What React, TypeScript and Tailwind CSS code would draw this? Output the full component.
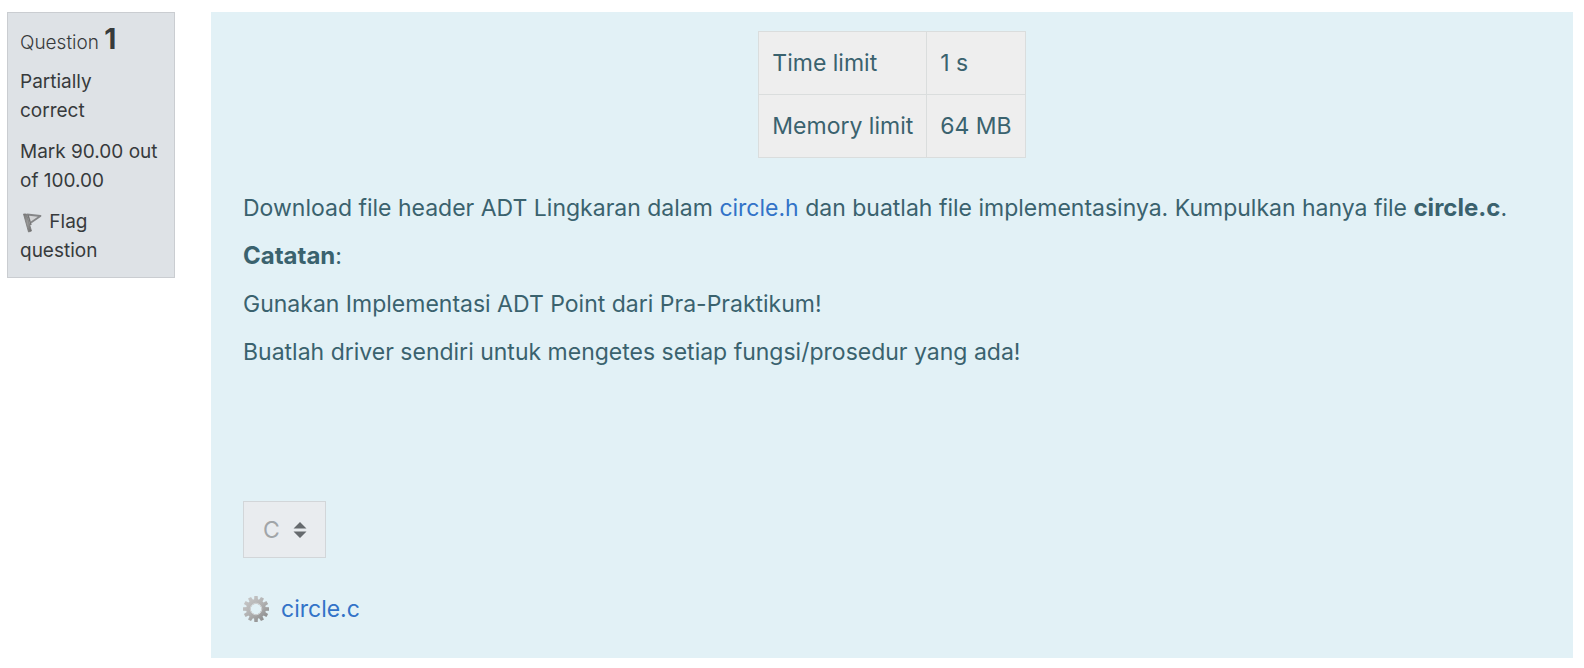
function FlagIcon() {
  return (
    <svg viewBox="0 0 24 24" className="inline-block size-6 align-[-6px]" aria-hidden="true">
      <defs>
        <linearGradient id="pole" x1="0" y1="0" x2="1" y2="1">
          <stop offset="0" stopColor="#777777" />
          <stop offset="0.5" stopColor="#999999" />
          <stop offset="1" stopColor="#6a6a6a" />
        </linearGradient>
      </defs>
      <path d="M7 4.500 20.500 6 11 12.500" fill="#d2d3d5" stroke="#858688" strokeWidth="1.800" strokeLinejoin="round" />
      <path d="M3.500 4 6.500 4 11.500 21 8.500 22Z" fill="url(#pole)" stroke="#777777" strokeWidth="0.800" />
      <path d="M8 5 11 15" stroke="#777777" strokeWidth="1.500" />
    </svg>
  );
}

const teeth = [0, 30, 60, 90, 120, 150, 180, 210, 240, 270, 300, 330];

function GearIcon() {
  return (
    <svg viewBox="0 0 26 26" className="size-[26px] shrink-0" aria-hidden="true">
      <defs>
        <linearGradient id="gear" gradientUnits="userSpaceOnUse" x1="4" y1="3" x2="22" y2="24">
          <stop offset="0" stopColor="#c6c6c6" />
          <stop offset="0.5" stopColor="#b0b0b0" />
          <stop offset="1" stopColor="#8c8c8c" />
        </linearGradient>
        <mask id="teeth">
          <circle cx="13" cy="13" r="10" fill="#fff" />
          {teeth.map((a) => (
            <path key={a} d="M11 5 11.300 0H14.700L15 5Z" fill="#fff" transform={`rotate(${a} 13 13)`} />
          ))}
          <circle cx="13" cy="13" r="5.300" fill="#000" />
        </mask>
      </defs>
      <rect width="26" height="26" fill="url(#gear)" mask="url(#teeth)" />
      <circle cx="13" cy="13" r="5.800" fill="none" stroke="#cfd1d2" strokeWidth="1" />
    </svg>
  );
}

const limits = [
  ["Time limit", "1 s"],
  ["Memory limit", "64 MB"],
];

export default function App() {
  return (
    <main className="flex items-start gap-9 bg-white py-3 pr-[11px] pl-[7px] font-['Inter',sans-serif]">
      <aside className="flex w-[168px] shrink-0 flex-col gap-3 border border-[#cacdd1] bg-[#dee2e6] py-3 pr-3.5 pl-3 text-[19px] leading-[29px] text-[#373a3c]">
        <div>
          <h3 className="mb-2 leading-8 font-light">
            Question <span className="text-[28px] leading-none font-bold">1</span>
          </h3>
          <p>Partially correct</p>
        </div>
        <p>Mark 90.00 out of 100.00</p>
        <a href="#flag">
          <FlagIcon /> Flag question
        </a>
      </aside>

      <section className="min-w-0 flex-1 bg-[#e2f1f6] px-8 pt-[19px] pb-[31px] text-[23px] leading-9 text-[#3a626e]">
        <table className="mx-auto border-collapse bg-[#eeeeee]">
          <tbody>
            {limits.map(([name, value]) => (
              <tr key={name}>
                <th scope="row" className="border border-[#dadddd] px-[13px] py-[13px] text-left font-normal">{name}</th>
                <td className="border border-[#dadddd] px-[13px] py-[13px]">{value}</td>
              </tr>
            ))}
          </tbody>
        </table>

        <div className="mt-8 flex flex-col gap-3">
          <p>
            Download file header ADT Lingkaran dalam{" "}
            <a href="#circle-h" className="text-[#3273c8]">circle.h</a> dan buatlah file implementasinya. Kumpulkan hanya file{" "}
            <strong className="text-[24px] leading-none font-bold">circle.c</strong>.
          </p>
          <p>
            <strong className="text-[24px] leading-none font-bold">Catatan</strong>:
          </p>
          <p>Gunakan Implementasi ADT Point dari Pra-Praktikum!</p>
          <p>Buatlah driver sendiri untuk mengetes setiap fungsi/prosedur yang ada!</p>
        </div>

        <div className="mt-[131px] grid w-[83px] items-center">
          <select
            aria-label="Language"
            disabled
            className="col-start-1 row-start-1 h-[57px] w-full appearance-none rounded-none border border-[#d2d6d9] bg-[#e9ecef] pl-[19px] text-[#a1a5a8] opacity-100"
          >
            <option>C</option>
          </select>
          <svg viewBox="0 0 14 16" className="pointer-events-none col-start-1 row-start-1 mr-[19px] h-4 w-[14px] justify-self-end" aria-hidden="true">
            <path d="M7 0 13.500 6.500H0.500ZM0.500 9.500H13.500L7 16Z" fill="#666a6e" />
          </svg>
        </div>

        <div className="mt-[33px] flex items-center gap-3">
          <GearIcon />
          <a href="#circle-c" className="text-[#3273c8]">circle.c</a>
        </div>
      </section>
    </main>
  );
}
